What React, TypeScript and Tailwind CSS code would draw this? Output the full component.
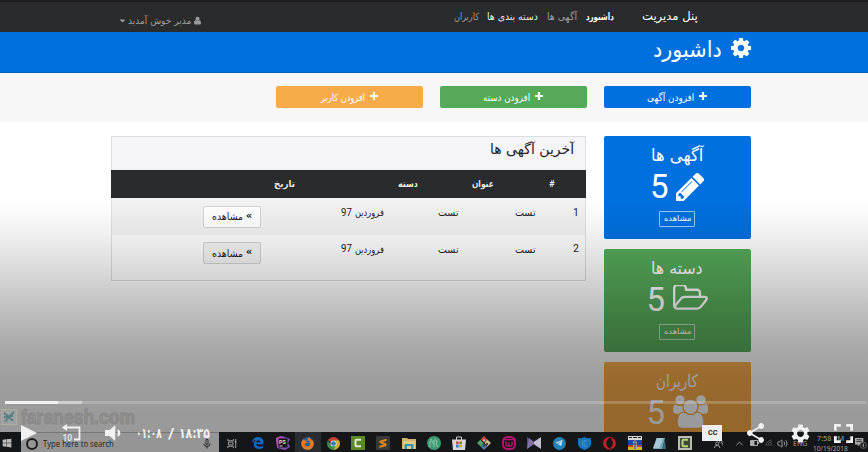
import { useLayoutEffect, useRef, useState, type ReactNode } from "react";
import { FaFirefoxBrowser, FaOpera, FaTelegramPlane, FaWindows, FaCaretDown } from "react-icons/fa";
import { MdShare, MdSettings, MdFullscreen, MdVolumeDown, MdPlayArrow, MdMicNone } from "react-icons/md";
import { ChevronUp, Wifi, Volume2 } from "lucide-react";

/* Keeps a line of text exactly as wide as its box. */
function Fit({ className, children, ltr }: { className: string; children: ReactNode; ltr?: boolean }) {
  const box = useRef<HTMLSpanElement>(null);
  const text = useRef<HTMLSpanElement>(null);
  const [k, setK] = useState(1);
  useLayoutEffect(() => {
    if (box.current && text.current) setK(box.current.clientWidth / text.current.offsetWidth);
  }, []);
  return (
    <span ref={box} dir="ltr" className={`flex shrink-0 items-center whitespace-nowrap ${className}`}>
      <span ref={text} dir={ltr ? "ltr" : "rtl"} className="block shrink-0 origin-left" style={{ transform: `scaleX(${k})` }}>
        {children}
      </span>
    </span>
  );
}

const COG =
  "M1152 896q0-106-75-181t-181-75-181 75-75 181 75 181 181 75 181-75 75-181zm512-109v222q0 12-8 23t-20 13l-185 28q-19 54-39 91 35 50 107 138 10 12 10 25t-9 23q-27 37-99 108t-94 71q-12 0-26-9l-138-108q-44 23-91 38-16 136-29 186-7 28-36 28h-222q-14 0-24.5-8.5t-11.5-21.5l-28-184q-49-16-90-37l-141 107q-10 9-25 9-14 0-25-11-126-114-165-168-7-10-7-23 0-12 8-23 15-21 51-66.5t54-70.5q-27-50-41-99l-183-27q-13-2-21-12.5t-8-23.5v-222q0-12 8-23t19-13l186-28q14-46 39-92-40-57-107-138-10-12-10-24 0-10 9-23 26-36 98.5-107.5t94.5-71.5q13 0 26 10l138 107q44-23 91-38 16-136 29-186 7-28 36-28h222q14 0 24.5 8.500t11.5 21.500l28 184q49 16 90 37l142-107q9-9 24-9 13 0 25 10 129 119 165 170 7 8 7 22 0 12-8 23-15 21-51 66.500t-54 70.500q26 50 41 98l183 28q13 2 21 12.500t8 23.500z";
const PENCIL =
  "M491 1536l91-91-235-235-91 91v107h128v128h107zm523-928q0-22-22-22-10 0-17 7l-542 542q-7 7-7 17 0 22 22 22 10 0 17-7l542-542q7-7 7-17zm-54-192l416 416-832 832h-416v-416zm683 96q0 53-37 90l-166 166-416-416 166-165q36-38 90-38 53 0 91 38l235 234q37 39 37 91z";
const FOLDER =
  "M1845 931q0-35-53-35h-1088q-40 0-85.500 21.500t-71.500 52.500l-294 363q-18 24-18 40 0 35 53 35h1088q40 0 86-22t71-53l294-363q18-22 18-39zm-1141-163h768v-160q0-40-28-68t-68-28h-576q-40 0-68-28t-28-68v-64q0-40-28-68t-68-28h-320q-40 0-68 28t-28 68v853l256-315q44-53 116-87.500t140-34.500zm1269 163q0 62-46 120l-295 363q-43 53-116 87.500t-140 34.500h-1088q-92 0-158-66t-66-158v-960q0-92 66-158t158-66h320q92 0 158 66t66 158v32h544q92 0 158 66t66 158v160h192q54 0 99 24.500t67 70.500q15 32 15 68z";
const USERS =
  "M657 896q-162 5-265 128h-134q-82 0-138-40.500t-56-118.500q0-353 124-353 6 0 43.500 21t97.500 42.500 119 21.500q67 0 133-23-5 37-5 66 0 159 93 293zm1071 637q0 120-73 189.500t-194 69.500h-874q-121 0-194-69.500t-73-189.500q0-53 3.500-103.500t14-109 26.500-108.500 43-97.500 62-81 85.500-53.500 111.500-20q10 0 43 21.500t73 48 107 48 135 21.500 135-21.500 107-48 73-48 43-21.500q61 0 111.500 20t85.500 53.500 62 81 43 97.500 26.500 108.500 14 109 3.500 103.500zm-1024-1277q0 106-75 181t-181 75-181-75-75-181 75-181 181-75 181 75 75 181zm704 384q0 159-112.500 271.500t-271.500 112.500-271.500-112.500-112.500-271.500 112.500-271.500 271.500-112.500 271.500 112.500 112.500 271.500zm576 225q0 78-56 118.500t-138 40.500h-134q-103-123-265-128 93-134 93-293 0-29-5-66 66 23 133 23 59 0 119-21.500t97.500-42.500 43.500-21q124 0 124 353zm-128-609q0 106-75 181t-181 75-181-75-75-181 75-181 181-75 181 75 75 181z";

function AddButton({ color, width, children }: { color: string; width: string; children: string }) {
  return (
    <div className={`flex h-[22px] w-[147px] items-center justify-center gap-[5px] rounded-[2px] text-[10px] text-white ${color}`}>
      <Fit className={`h-4 ${width}`}>{children}</Fit>
      <svg viewBox="0 0 8 8" className="mb-[2px] size-[8px]"><path d="M4 0v8M0 4h8" stroke="currentColor" strokeWidth="2.200" /></svg>
    </div>
  );
}

function StatCard({ color, title, width, icon }: { color: string; title: string; width: string; icon: ReactNode }) {
  return (
    <div className={`flex h-[103px] w-[147px] shrink-0 flex-col items-center rounded-[2px] pt-[9px] text-white ${color}`}>
      <Fit className={`h-[22px] text-[17px] ${width}`}>{title}</Fit>
      <div className="flex h-[40px] items-center gap-[9px]">
        <span className="w-[17px] text-center font-[Roboto] text-[33px] leading-none">5</span>
        {icon}
      </div>
      <div className="mt-[4.500px] flex h-[16px] w-[36px] items-center justify-center rounded-[1px] border border-white/60 text-[8px]">
        <Fit className="h-3 w-[27px]">مشاهده</Fit>
      </div>
    </div>
  );
}

function Row({ n, tone, btn }: { n: string; tone: string; btn: string }) {
  return (
    <div className={`flex h-[36.500px] shrink-0 items-start text-[10px] text-[#1d1d1d] ${tone}`}>
      <div className={`ml-[91px] mt-[7.500px] flex h-[22px] w-[58px] items-center justify-center gap-[3px] rounded-[2px] border ${btn}`}>
        <Fit className="h-4 w-[31px]">مشاهده</Fit>
        <span className="pb-[2px] text-[10px] font-bold leading-none">«</span>
      </div>
      <Fit ltr className="ml-[80px] mt-[6.500px] h-4 w-[11px] font-[Roboto] text-[10.500px]">97</Fit>
      <Fit className="ml-[3px] mt-[6.500px] h-4 w-[29px]">فروردین</Fit>
      <Fit className="ml-[54px] mt-[6.500px] h-4 w-[21px]">تست</Fit>
      <Fit className="ml-[56px] mt-[6.500px] h-4 w-[21px]">تست</Fit>
      <Fit ltr className="ml-[37px] mt-[6.500px] h-4 w-[6px] font-[Roboto] text-[10.500px]">{n}</Fit>
    </div>
  );
}

function Camtasia({ light }: { light?: boolean }) {
  return (
    <svg viewBox="0 0 14 14" className="size-[14px]">
      <rect width="14" height="14" fill={light ? "#b9bdb2" : "#5b8a24"} />
      {light && <rect x="2" y="2" width="10" height="10" fill="#414a35" />}
      <path d="M10 3.800H5.500Q4.500 3.800 4.500 5v4q0 1.200 1 1.200H10" fill="none" stroke={light ? "#b7d67c" : "#e2e8d5"} strokeWidth="2" />
    </svg>
  );
}

function TaskIcons() {
  const cell = "flex h-full w-[25.150px] shrink-0 items-center justify-center pt-[2px]";
  return (
    <div className="flex h-full">
      <div className={cell}>
        <svg viewBox="0 0 12 12" className="size-[11px]" fill="none" stroke="#aaa" strokeWidth="1">
          <path d="M1 1v2h6V1M1 11V9h6v2M1.500 4.500h5v3h-5zM9.500 1v10M8.500 4h2" />
        </svg>
      </div>
      <div className={cell}>
        <svg viewBox="0 0 13 13" className="size-[12px]" fill="#1269b7">
          <path d="M0 6.200Q1 0 6.800 0 12.500.300 12.500 6.300V7.800H4.300Q4.800 10.500 8 10.500q2.200 0 4-1.100v2.600Q10 13 7.500 13 1.800 12.800 1.800 7.500 2 4.500 4.500 3.200 1.800 3.300 0 6.200zM4.500 5.700h4.400Q8.800 3.400 6.700 3.400 4.700 3.600 4.500 5.700z" />
        </svg>
      </div>
      <div className={cell}>
        <svg viewBox="0 0 14 14" className="size-[14px]">
          <path d="M0 2l6-2 8 3-2 4 2 4-5 3-8-2z" fill="#8751b8" /><path d="M0 2l5-2-2 12-2-2z" fill="#c14aae" />
          <rect x="2.500" y="2.500" width="9" height="9" fill="#111" />
          <text x="3" y="7.500" fontSize="5.500" fontWeight="700" fontFamily="Roboto" fill="#ddd">PS</text><path d="M3.500 10h3" stroke="#ddd" />
        </svg>
      </div>
      <div className={`${cell} bg-[#2b2c2f]`}>
        <div className="flex size-[13px] items-center justify-center rounded-full bg-[#205f9c]"><FaFirefoxBrowser className="size-[13px] text-[#e8791f]" /></div>
      </div>
      <div className={cell}>
        <svg viewBox="0 0 14 14" className="size-[13px]">
          <path d="M7 7L1 3.500A7 7 0 0 1 13 3.500H7z" fill="#c54435" /><path d="M7 7V3.500h6A7 7 0 0 1 7 14z" fill="#d7ac2c" />
          <path d="M1 3.500A7 7 0 0 0 7 14l3-5.500H4z" fill="#368f4d" /><circle cx="7" cy="7" r="3.300" fill="#ddd" /><circle cx="7" cy="7" r="2.500" fill="#3c76be" />
        </svg>
      </div>
      <div className={cell}><Camtasia /></div>
      <div className={cell}>
        <svg viewBox="0 0 14 14" className="size-[14px]"><rect width="14" height="14" rx="1" fill="#393939" /><path d="M10.500 2.800v2.300L6.500 6l4 1.700V10l-7 2V9.700l4-1.200-4-1.700V4.700z" fill="#da891d" /></svg>
      </div>
      <div className={cell}>
        <svg viewBox="0 0 14 12" className="h-3 w-[14px]"><path d="M0 1h5l1 1h8v10H0z" fill="#d2b36d" /><path d="M1 4h12v8H1z" fill="#e0ca8b" /><path d="M2.500 7h9v5H9V9H5v3H2.500z" fill="#4291aa" /></svg>
      </div>
      <div className={cell}>
        <svg viewBox="0 0 14 14" className="size-[14px]"><circle cx="7" cy="7" r="7" fill="#3d9873" /><path d="M3 11V7q0-3 2-2t1 3m1 3V4h2q2 1 0 4l2 3M3 4l2-1" stroke="#8fc7aa" fill="none" /></svg>
      </div>
      <div className={cell}>
        <svg viewBox="0 0 14 14" className="size-[14px]"><path d="M4.500 4V1h5v3" fill="none" stroke="#ccc" /><path d="M0 3.500h14L13 14H1z" fill="#d9d9d9" /><path d="M4 5.500h2.700v2.700H4z" fill="#c84b2d" /><path d="M7.300 5.500H10v2.700H7.300z" fill="#60952f" /><path d="M4 8.800h2.700v2.700H4z" fill="#2780b8" /><path d="M7.300 8.800H10v2.700H7.300z" fill="#d5a526" /></svg>
      </div>
      <div className={cell}>
        <svg viewBox="0 0 14 14" className="size-[14px]"><path d="M7 0L3.500 3.500 7 7l3.500-3.500z" fill="#bd4b3e" /><path d="M3.500 3.500L0 7l3.500 3.500L7 7z" fill="#569d5d" /><path d="M10.500 3.500L7 7l3.500 3.500L14 7z" fill="#c9ba91" /><path d="M7 7l-3.500 3.500L7 14l3.500-3.500z" fill="#4a7ba8" /><path d="M3 3l7 7M7 4v7" stroke="#222" /><circle cx="7" cy="4.500" r="1" fill="#ddd" /><circle cx="10" cy="8" r="1" fill="#222" /></svg>
      </div>
      <div className={cell}>
        <svg viewBox="0 0 14 14" className="size-[14px]"><rect x="1" y="1" width="12" height="12" rx="4.500" fill="none" stroke="#b5136e" strokeWidth="2" /><path d="M2 3.500h10M4 5.500v3.500q0 1 1.500 1T7 9V6.500V9q0 1 1.500 1T10 9V5.500" stroke="#b5136e" strokeWidth="1.500" fill="none" /></svg>
      </div>
      <div className={cell}>
        <svg viewBox="0 0 14 12" className="h-3 w-[14px]"><path d="M0 0l8 6-8 6z" fill="#514a87" /><path d="M14 0L5 6l9 6z" fill="#c4bdce" /><path d="M2 1l5 4v2l-7 5z" fill="#8174aa" /></svg>
      </div>
      <div className={cell}><div className="flex size-[13px] items-center justify-center rounded-full bg-[#2182b6]"><FaTelegramPlane className="size-[8px] text-[#ddd]" /></div></div>
      <div className={cell}>
        <svg viewBox="0 0 14 14" className="size-[13px]"><path d="M0 1q4 1 7-1 3 2 7 1v7q-1 4-7 6-6-2-7-6z" fill="#1777bd" /><path d="M9.500 4q-5-1-5 3t5 3M7 5q-2 2 1 4" stroke="#4a9bd0" fill="none" /></svg>
      </div>
      <div className={cell}><FaOpera className="size-[13px] text-[#c92028]" /></div>
      <div className={cell}>
        <svg viewBox="0 0 14 14" className="size-[14px]"><path d="M0 0h14v4H0z" fill="#d6d7d6" /><path d="M0 4h14v5H0z" fill="#1c46a6" /><path d="M0 9h14v2H0z" fill="#b94030" /><path d="M0 11h14v3H0z" fill="#d9b921" /><path d="M1 1.500h3M5 1.500h4M10 1.500h3" stroke="#222" /><path d="M5 6l2-2 2 2v7H5z" fill="#aaa8a2" /><path d="M7 5v8M5 8h4" stroke="#424957" /></svg>
      </div>
      <div className={cell}>
        <svg viewBox="0 0 14 12" className="h-[11px] w-[13px]"><path d="M4 0h9l-3 12H0z" fill="#6fa6b8" /><path d="M4 0h7L7 11H0z" fill="#a5cad5" /><path d="M10 12l3-10 1 10z" fill="#416e7a" /></svg>
      </div>
      <div className={cell}><Camtasia light /></div>
    </div>
  );
}

export default function App() {
  return (
    <div className="relative flex h-[452px] w-[868px] flex-col overflow-hidden bg-white font-['DejaVu_Sans',sans-serif]">
      <div className="relative flex h-[432px] flex-col overflow-hidden">
        <header className="flex h-[32px] shrink-0 border-t-2 border-[#211d20] bg-[#292b2c] text-[10px] text-[#9b9c9d]">
          <div className="ml-[118px] mt-[10px] flex h-4 items-center">
            <FaCaretDown className="mr-px size-[9px]" />
            <Fit className="h-4 w-[63px]">مدیر خوش آمدید</Fit>
            <svg viewBox="0 0 8 9" className="ml-[3px] h-[9px] w-[7px]" fill="currentColor">
              <circle cx="4" cy="2.500" r="2.300" />
              <path d="M1.700 4Q4 6.300 6.300 4 8 4.500 8 7.500 8 9 6.700 9H1.300Q0 9 0 7.500 0 4.500 1.700 4z" />
            </svg>
          </div>
          <nav className="ml-[253px] mt-[6px] flex h-4">
            <Fit className="w-[25px]">کاربران</Fit>
            <Fit className="ml-[8px] w-[51px] text-[#ededed]">دسته بندی ها</Fit>
            <Fit className="ml-[9px] w-[30px]">آگهی ها</Fit>
            <Fit className="ml-[9px] w-[28px] font-bold text-white">داشبورد</Fit>
          </nav>
          <Fit className="ml-[28px] mt-[6px] h-4 w-[56px] text-[12px] text-white">پنل مدیریت</Fit>
        </header>
        <div className="flex h-[40.500px] shrink-0 items-start justify-end border-b border-[#075fb9] bg-[#0070df] pr-[117px] pt-[4px] text-white">
          <Fit className="mr-[9px] h-[26px] w-[69px] text-[22px]">داشبورد</Fit>
          <svg viewBox="128 128 1536 1536" className="mt-[2px] size-[20px]" fill="currentColor"><path d={COG} /></svg>
        </div>
        <div className="flex h-[49px] shrink-0 justify-end gap-[17px] bg-[#f7f7f7] pr-[117.500px] pt-[13.500px]">
          <AddButton color="bg-[#f8ab49]" width="w-[44px]">افزودن کاربر</AddButton>
          <AddButton color="bg-[#56a959]" width="w-[47px]">افزودن دسته</AddButton>
          <AddButton color="bg-[#0070df]" width="w-[47px]">افزودن آگهی</AddButton>
        </div>
        <main className="flex items-start gap-[17.500px] pl-[111px] pt-[14px]">
          <section className="flex h-[145px] w-[475px] flex-col border border-[#dedede]">
            <div className="flex h-[33.500px] shrink-0 justify-end bg-[#f5f5f8] pr-[11px] pt-[2px] text-[14px] text-[#222]">
              <Fit className="h-[22px] w-[84px]">آخرین آگهی ها</Fit>
            </div>
            <div className="-mx-px flex h-[28px] shrink-0 items-center bg-[#292b2c] text-[9.500px] font-bold text-[#e8e8e8]">
              <Fit className="ml-[163px] w-[21px]">تاریخ</Fit>
              <Fit className="ml-[103px] w-[20px]">دسته</Fit>
              <Fit className="ml-[54px] w-[22px]">عنوان</Fit>
              <Fit ltr className="ml-[55px] w-[6px]">#</Fit>
            </div>
            <Row n="1" tone="bg-[#f2f2f2]" btn="bg-white border-[#d4d4d4]" />
            <Row n="2" tone="bg-white" btn="bg-[#f5f5f5] border-[#d4d4d4]" />
          </section>
          <aside className="flex flex-col gap-[10px]">
            <StatCard color="bg-[#0070df]" title="آگهی ها" width="w-[52px]"
              icon={<svg viewBox="128 149 1515 1515" className="size-[28px]" fill="currentColor"><path d={PENCIL} /></svg>} />
            <StatCard color="bg-[#56a959]" title="دسته ها" width="w-[52px]"
              icon={<svg viewBox="64 256 1909 1280" className="mb-[3px] h-[26px] w-[35px]" fill="currentColor"><path d={FOLDER} /></svg>} />
            <StatCard color="bg-[#f8ab49]" title="کاربران" width="w-[42px]"
              icon={<svg viewBox="64 0 1920 1792" className="mb-[3px] h-[33px] w-[35px]" fill="currentColor"><path d={USERS} /></svg>} />
          </aside>
        </main>
        <div className="absolute inset-x-0 bottom-0 h-[232px] bg-[linear-gradient(to_bottom,rgba(0,0,0,0)_0%,rgba(0,0,0,.05)_13%,rgba(0,0,0,.12)_26%,rgba(0,0,0,.2)_39%,rgba(0,0,0,.28)_52%,rgba(0,0,0,.345)_65%,rgba(0,0,0,.385)_78%,rgba(0,0,0,.4)_100%)]" />
      </div>

      <footer className="flex h-[20px] shrink-0 bg-[#151617] font-['Open_Sans',sans-serif] text-[#aaa]">
        <div className="flex w-[21px] items-center pl-[2px] pt-[2px]"><FaWindows className="size-[10px] text-[#bbb]" /></div>
        <div className="flex w-[198px] items-center border-t border-[#777] bg-[#959595] pl-[5px] pt-[2px] text-[9px] text-[#222]">
          <span className="size-[12px] rounded-full border-2 border-[#1c1c1c]" />
          <Fit ltr className="ml-[5px] w-[71px]">Type here to search</Fit>
          <MdMicNone className="ml-[87px] size-[12px]" />
        </div>
        <div className="w-[478px] pl-[1px]"><TaskIcons /></div>
        <div className="flex grow items-center pl-[17px] pt-[2px]">
          <svg viewBox="0 0 10 10" className="size-[9px]" fill="none" stroke="currentColor"><circle cx="3.500" cy="5" r="1.700" /><path d="M.5 10q0-3 3-3t3 3M7 4a1.500 1.500 0 1 1 1 0q2 0 2 3" /></svg>
          <ChevronUp className="ml-[11px] size-[11px]" />
          <svg viewBox="0 0 9 6" className="ml-[5px] h-[6px] w-[9px]" fill="none" stroke="currentColor"><path d="M.5.500h7v5h-7zM8.500 2v2" /><path d="M1 1h3v4H1z" fill="currentColor" /></svg>
          <Wifi className="ml-[6px] size-[9px] -rotate-45 text-[#666]" />
          <Volume2 className="ml-[3px] size-[11px]" />
          <Fit ltr className="ml-[5px] w-[14px] text-[8px]">ENG</Fit>
          <div className="ml-[5px] flex h-[20px] w-[36px] flex-col items-center text-[7.500px] leading-[10px]">
            <Fit ltr className="h-[10px] w-[27px]">7:58 PM</Fit>
            <Fit ltr className="h-[10px] w-[35px]">10/19/2018</Fit>
          </div>
          <svg viewBox="0 0 13 13" className="ml-[7px] size-[12px]"><path d="M0 1h9v7H5L3 10V8H0z" fill="#aaa" /><path d="M1.500 3h6M1.500 5h6" stroke="#333" /><circle cx="9" cy="9" r="3.500" fill="#222" stroke="#777" strokeWidth=".7" /><path d="M9 7v4" stroke="#aaa" /></svg>
        </div>
      </footer>

      <div className="absolute left-px top-[408px] flex h-[18px] items-center">
        <svg viewBox="0 0 16 16" className="size-[16px]"><rect x=".5" y=".5" width="15" height="15" fill="#9fa2a1" stroke="#aeada5" /><path d="M3 4l5 4-4 5M13 3L8 8l4 4M3 8.500l9-2" stroke="#567f8a" strokeWidth="1.800" fill="none" /></svg>
        <Fit ltr className="ml-[4px] w-[114px] font-['Liberation_Sans',sans-serif] text-[20px] font-bold leading-[18px] text-[#8f8f8f] [-webkit-text-stroke:0.800px_#868686]">faranesh.com</Fit>
      </div>
      <div className="absolute left-[5px] top-[400.500px] flex h-[3.500px] w-[861px] bg-white/20">
        <div className="w-[53px] bg-[#f2f2f2]" />
        <div className="w-[24px] bg-white/40" />
      </div>
      <div className="absolute left-0 top-[422px] flex h-[22px] w-[868px] items-center text-[#f1f1f1]">
        <MdPlayArrow viewBox="8 5 11 14" preserveAspectRatio="none" className="ml-[21px] h-[16px] w-[16px]" />
        <svg viewBox="0 0 19 18" className="ml-[25px] h-[18px] w-[19px]" fill="none" stroke="currentColor" strokeWidth="1.800">
          <path d="M3 3.500h14.500v12H12" /><path d="M0 3.500L5 0v7z" fill="currentColor" stroke="none" />
          <text x="0.500" y="16.500" fontSize="8.500" fontWeight="500" fontFamily="Roboto" fill="currentColor" stroke="none">10</text>
        </svg>
        <MdVolumeDown viewBox="5 4 14 16" preserveAspectRatio="none" className="ml-[24px] h-[16px] w-[16px]" />
        <div className="ml-[15px] flex w-[74px] items-center justify-between text-[14px] font-bold">
          <Fit ltr className="w-[26px]">۰۱:۰۸</Fit>
          <Fit ltr className="w-[6px]">/</Fit>
          <Fit ltr className="w-[31px]">۱۸:۳۵</Fit>
        </div>
        <div className="ml-[492px] flex h-[16px] w-[20px] items-center justify-center bg-[#efefef] text-[#222]">
          <Fit ltr className="w-[9px] font-[Roboto] text-[8px] font-bold">CC</Fit>
        </div>
        <MdShare viewBox="3 2 18 20" preserveAspectRatio="none" className="ml-[25px] h-[20px] w-[17px]" />
        <MdSettings viewBox="2 2 20 20" className="ml-[27px] size-[19px]" />
        <MdFullscreen viewBox="5 5 14 14" className="ml-[24px] size-[19px]" />
      </div>
    </div>
  );
}
